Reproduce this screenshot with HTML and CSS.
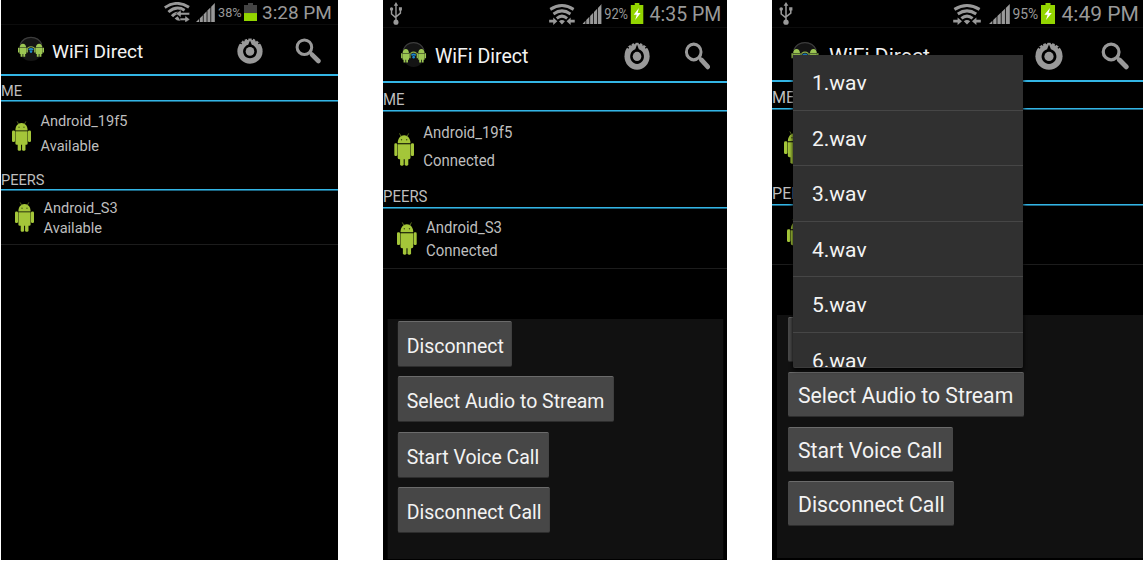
FILE: index.html
```html
<!DOCTYPE html>
<html lang="en">
<head>
<meta charset="utf-8">
<title>WiFi Direct</title>
<link rel="stylesheet" href="styles.css">
</head>
<body>
<svg class="defs" aria-hidden="true">
  <symbol id="robot" viewBox="0 0 20 32" preserveAspectRatio="none">
    <g fill="#a4c639">
      <path d="M3.6 10C3.6 5.4 6.2 2.2 10 2.2S16.4 5.4 16.4 10Z"/>
      <path d="M3.6 11H16.4V24Q16.4 25.4 15 25.4H5Q3.6 25.4 3.6 24Z"/>
      <rect x="0" y="10" width="3.2" height="12.4" rx="1.4"/>
      <rect x="16.8" y="10" width="3.2" height="12.4" rx="1.4"/>
      <rect x="6" y="23" width="3.6" height="8.8" rx="1.4"/>
      <rect x="10.6" y="23" width="3.6" height="8.8" rx="1.4"/>
    </g>
    <path d="M5.4 0.4L7 3.4M14.6 0.4L13 3.4" stroke="#6d8426" stroke-width="0.8"/>
    <circle cx="7.4" cy="6.6" r="0.7" fill="#3c4a12"/><circle cx="12.6" cy="6.6" r="0.7" fill="#3c4a12"/>
  </symbol>
  <symbol id="logo" viewBox="0 0 26 26">
    <circle cx="13" cy="13" r="12" fill="#141414"/>
    <path d="M2.2 8.5A11.8 11.8 0 0 1 23.8 8.5" fill="none" stroke="#3c3c3c" stroke-width="1.2"/>
    <g fill="#9cc653">
      <path d="M1.6 11.6Q2 7.8 4.9 7.8T8.2 11.6ZM1.6 12H8.2V18H1.6ZM0 11.8H1.3V16.6H0ZM8.5 11.8H9.8V16.6H8.5ZM2.6 17.6H4.5V20.8H2.6ZM5.3 17.6H7.2V20.8H5.3Z"/>
      <path d="M17.8 11.6Q18.2 7.8 21.1 7.8T24.4 11.6ZM17.8 12H24.4V18H17.8ZM16.2 11.8H17.5V16.6H16.2ZM24.7 11.8H26V16.6H24.7ZM18.8 17.6H20.7V20.8H18.8ZM21.5 17.6H23.4V20.8H21.5Z"/>
    </g>
    <path d="M9.8 12Q13 9.4 16.2 12" fill="none" stroke="#8fb04a" stroke-width="1.1"/>
    <path d="M10.8 13.9Q13 12 15.2 13.9" fill="none" stroke="#1b86cf" stroke-width="1.7"/>
    <circle cx="13" cy="15.6" r="1.3" fill="#1b86cf"/>
  </symbol>
  <symbol id="gear" viewBox="0 0 26 26">
    <circle cx="13" cy="13.2" r="12.6" fill="#999"/>
    <path d="M3.2 4.8L4.8 5.6M6.4 1.4L7.3 3.2M10.4 0L10.8 1.9M15.6 0L15.2 1.9M19.6 1.4L18.7 3.2M22.8 4.8L21.2 5.6" stroke="#000" stroke-width="1.3"/>
    <path d="M13 2.4L14.8 6.8A6.9 6.9 0 1 1 11.2 6.8Z" fill="#000"/>
    <circle cx="13" cy="13.4" r="4.3" fill="#999"/>
  </symbol>
  <symbol id="search" viewBox="0 0 26 26">
    <circle cx="9.4" cy="9.2" r="7.3" fill="none" stroke="#999" stroke-width="3"/>
    <path d="M15 14.6L17 16.6" stroke="#999" stroke-width="3"/>
    <path d="M17.2 16.8L23.4 23" stroke="#999" stroke-width="4.6" stroke-linecap="round"/>
  </symbol>
  <symbol id="usb" viewBox="0 0 14 24">
    <g fill="none" stroke="#999" stroke-width="1.6"><path d="M7 3V20M2 8V12.5L7 16.5M12 8V11.5L7 15.5"/></g>
    <path d="M7 0L9.5 4H4.5ZM10.3 5.6H13.7V8.9H10.3Z" fill="#999"/>
    <circle cx="2" cy="7.4" r="1.9" fill="#999"/><circle cx="7" cy="21" r="2.8" fill="#999"/>
  </symbol>
  <symbol id="wifi-tilt" viewBox="0 0 26 20">
    <g fill="none" stroke="#999" stroke-width="2.9">
      <path d="M0.8 5.6Q12.8 -2.6 25 5.2"/>
      <path d="M4.4 10Q12.4 3.2 20.6 8.2"/>
      <path d="M8 14.2Q11.4 10.2 15.4 11.4"/>
    </g>
    <path d="M10.6 16.4L13.6 14.2L16.6 18.6Q13.4 19.4 10.6 16.4Z" fill="#999"/>
    <path d="M11.8 11.7L17 7.8V10.4H25.6V13H17V15.4ZM26 17.4L21 13.6V16.1H16V18.6H21V20.8Z" fill="#999" stroke="#000" stroke-width=".5"/>
  </symbol>
  <symbol id="wifi" viewBox="0 0 28 21">
    <g fill="none" stroke="#999" stroke-width="3">
      <path d="M1.4 5.4Q14 -2.2 26.6 5.4"/>
      <path d="M4.8 10Q14 3.8 23.2 10"/>
      <path d="M8.4 14.4Q14 9.8 19.6 14.4"/>
    </g>
    <path d="M10.8 17.2Q14 14.8 17.2 17.2L14 20.4ZM9 17.2L4.6 13.4V15.8H0.2V18.6H4.6V21ZM19 17.2L23.4 13.4V15.8H27.8V18.6H23.4V21Z" fill="#999"/>
  </symbol>
  <symbol id="signal" viewBox="0 0 20 20" preserveAspectRatio="none">
    <path d="M0 20L3.2 16.8V20ZM4 16L7.2 12.8V20H4ZM8 12L11.2 8.8V20H8ZM12 8L15.2 4.8V20H12ZM16 4L19.8 0V20H16Z" fill="#999"/>
  </symbol>
  <symbol id="battery-low" viewBox="0 0 13 19" preserveAspectRatio="none">
    <path d="M4 0H9V2H13V11H0V2H4Z" fill="#444"/><path d="M0 10.6H13V19H0Z" fill="#93d500"/>
  </symbol>
  <symbol id="battery-charge" viewBox="0 0 14 21" preserveAspectRatio="none">
    <path d="M4.5 0H9.5V2H14V21H0V2H4.5Z" fill="#93d500"/>
    <path d="M9 5L3.4 11.8H6.6L5 17L10.8 10H7.6Z" fill="#fff"/>
  </symbol>
</svg>

<main class="board">
  <section class="phone phone-small">
    <div class="screen">
      <div class="status">
        <svg class="wifi"><use href="#wifi-tilt"/></svg>
        <svg class="signal"><use href="#signal"/></svg>
        <span class="percent">38%</span>
        <svg class="battery"><use href="#battery-low"/></svg>
        <span class="time">3:28 PM</span>
      </div>
      <header class="appbar">
        <svg class="logo"><use href="#logo"/></svg>
        <h1 class="title">WiFi Direct</h1>
        <svg class="action gear"><use href="#gear"/></svg>
        <svg class="action search"><use href="#search"/></svg>
      </header>
      <h2 class="heading heading-me">ME</h2>
      <div class="device me">
        <svg class="robot"><use href="#robot"/></svg>
        <div><p>Android_19f5</p><p>Available</p></div>
      </div>
      <h2 class="heading heading-peers">PEERS</h2>
      <div class="device peer">
        <svg class="robot"><use href="#robot"/></svg>
        <div><p>Android_S3</p><p>Available</p></div>
      </div>
    </div>
  </section>

  <section class="phone phone-narrow">
    <div class="screen">
      <div class="status">
        <svg class="usb"><use href="#usb"/></svg>
        <svg class="wifi"><use href="#wifi"/></svg>
        <svg class="signal"><use href="#signal"/></svg>
        <span class="percent">92%</span>
        <svg class="battery"><use href="#battery-charge"/></svg>
        <span class="time">4:35 PM</span>
      </div>
      <header class="appbar">
        <svg class="logo"><use href="#logo"/></svg>
        <h1 class="title">WiFi Direct</h1>
        <svg class="action gear"><use href="#gear"/></svg>
        <svg class="action search"><use href="#search"/></svg>
      </header>
      <h2 class="heading heading-me">ME</h2>
      <div class="device me">
        <svg class="robot"><use href="#robot"/></svg>
        <div><p>Android_19f5</p><p>Connected</p></div>
      </div>
      <h2 class="heading heading-peers">PEERS</h2>
      <div class="device peer">
        <svg class="robot"><use href="#robot"/></svg>
        <div><p>Android_S3</p><p>Connected</p></div>
      </div>
      <div class="panel">
        <button class="btn btn-disconnect">Disconnect</button>
        <button class="btn btn-select">Select Audio to Stream</button>
        <button class="btn btn-start">Start Voice Call</button>
        <button class="btn btn-end">Disconnect Call</button>
      </div>
    </div>
  </section>

  <section class="phone phone-wide">
    <div class="screen">
      <div class="status">
        <svg class="usb"><use href="#usb"/></svg>
        <svg class="wifi"><use href="#wifi"/></svg>
        <svg class="signal"><use href="#signal"/></svg>
        <span class="percent">95%</span>
        <svg class="battery"><use href="#battery-charge"/></svg>
        <span class="time">4:49 PM</span>
      </div>
      <header class="appbar">
        <svg class="logo"><use href="#logo"/></svg>
        <h1 class="title">WiFi Direct</h1>
        <svg class="action gear"><use href="#gear"/></svg>
        <svg class="action search"><use href="#search"/></svg>
      </header>
      <h2 class="heading heading-me">ME</h2>
      <div class="device me">
        <svg class="robot"><use href="#robot"/></svg>
      </div>
      <h2 class="heading heading-peers">PEERS</h2>
      <div class="device peer">
        <svg class="robot"><use href="#robot"/></svg>
      </div>
      <div class="panel">
        <button class="btn btn-disconnect" aria-label="Disconnect"></button>
        <button class="btn btn-select">Select Audio to Stream</button>
        <button class="btn btn-start">Start Voice Call</button>
        <button class="btn btn-end">Disconnect Call</button>
      </div>
      <ul class="menu">
        <li>1.wav</li><li>2.wav</li><li>3.wav</li><li>4.wav</li><li>5.wav</li><li>6.wav</li>
      </ul>
    </div>
  </section>
</main>
</body>
</html>
```
FILE: styles.css
```css
* { box-sizing: border-box; }
body { margin: 0; background: #fff; font-family: Roboto, sans-serif; overflow: hidden; }
h1, h2, p, ul { margin: 0; padding: 0; font-weight: 400; }
svg { display: block; flex: none; }
.defs { position: absolute; width: 0; height: 0; }

.board { display: flex; width: 1143px; height: 587px; padding-left: 1px; align-items: flex-start; }
.phone { flex: none; height: 560px; background: #000; overflow: hidden; }
.screen { position: relative; width: 371px; height: 560px; display: flex; flex-direction: column; color: #bebebe; font-size: 16.1px; }
.phone-small { width: 337px; }
.phone-small .screen { width: 337px; font-size: 14.6px; }
.phone-narrow { width: 344px; margin-left: 45px; }
.phone-narrow .screen { transform: scaleX(.9272); transform-origin: 0 0; }
.phone-wide { width: 371px; margin-left: 45px; }

/* Status bar */
.status { flex: none; height: 28px; display: flex; align-items: flex-start; color: #999; border-bottom: 1px solid #0c0c0c; }
.usb { width: 14px; height: 23px; margin: 2px 0 0 7px; }
.wifi { width: 28px; height: 21px; margin: 4px 0 0 160px; }
.signal { width: 21px; height: 20px; margin: 4px 0 0 8px; }
.percent { width: 28px; margin-left: 2.5px; font-size: 13.9px; line-height: 29px; }
.battery { width: 14px; height: 21px; margin-top: 3px; }
.time { margin-left: 7px; font-size: 21px; line-height: 28px; white-space: nowrap; }
.phone-narrow .wifi { margin-left: 158px; }
.phone-small .status { height: 25px; }
.phone-small .wifi { width: 26px; height: 20px; margin: 2px 0 0 163px; }
.phone-small .signal { width: 19px; height: 19px; margin: 3px 0 0 6px; }
.phone-small .percent { width: 26px; margin-left: 3px; font-size: 12.7px; line-height: 26px; }
.phone-small .battery { width: 13px; height: 18px; }
.phone-small .time { margin-left: 5px; font-size: 19px; line-height: 25px; }

/* App bar */
.appbar { flex: none; height: 54px; padding: 4px 0 0 19px; display: flex; align-items: center; border-bottom: 2px solid #33b5e5; }
.logo { width: 28px; height: 27px; margin-top: -4px; }
.title { margin-left: 9px; width: 199px; color: #f3f3f3; font-size: 21.1px; line-height: 30px; padding-left: 1px; }
.action { width: 28px; height: 28px; }
.gear { margin-left: 8px; }
.search { margin-left: 38px; }
.phone-small .appbar { height: 51px; padding: 3px 0 0 17px; }
.phone-small .logo { width: 26px; height: 26px; }
.phone-small .title { margin-left: 8px; width: 177px; font-size: 19.1px; padding: 1px 0 0; }
.phone-small .action { width: 26px; height: 26px; }
.phone-small .search { margin-left: 32px; }
.phone-narrow .appbar { height: 55px; padding-top: 3px; }
.phone-narrow .title { width: 196px; padding-left: 0; }
.phone-narrow .search { margin-left: 37px; }

/* Lists */
.heading { flex: none; height: 28px; display: flex; align-items: flex-end; font-size: inherit; line-height: 1.16; border-bottom: 1px solid #33b5e5; box-shadow: 0 1px #1b6480; }
.heading-peers { height: 34px; }
.device { flex: none; display: flex; height: 62px; }
.device.me { padding: 8px 0 0 12px; line-height: 27.8px; }
.device.peer { height: 60px; padding: 9.3px 0 0 15px; line-height: 22.3px; border-bottom: 1px solid #1c1c1c; }
.robot { width: 21.5px; height: 33px; margin: 14px 10px 0 0; }
.peer .robot { margin-top: 5px; }
.phone-small .heading { height: 25px; }
.phone-small .heading-peers { height: 31px; }
.phone-small .device.me { height: 58px; padding: 8px 0 0 11px; line-height: 25.3px; }
.phone-small .device.peer { height: 55px; padding: 8px 0 0 14px; line-height: 20.3px; }
.phone-small .robot { width: 19px; height: 30px; margin: 12px 9.5px 0 0; }
.phone-small .peer .robot { margin-top: 4px; }

.phone-narrow .device.me { height: 63px; }
.phone-narrow .device.peer { height: 61px; }

/* Button panel */
.panel { flex: none; width: 362px; height: 240px; margin: 50px 0 0 4.5px; padding: 2px 0 0 11.5px; background: #111; display: flex; flex-direction: column; align-items: flex-start; gap: 9.4px; }
.btn { height: 46px; padding: 2px 0 0 10px; border: 0; border-top: 1px solid #6b6b6b; border-bottom: 1px solid #2d2d2d; border-radius: 2px; background: #474747; color: #f3f3f3; font: 21.2px/42px Roboto, sans-serif; text-align: left; white-space: nowrap; }
.btn-disconnect { width: 123px; }
.btn-select { width: 235.5px; }
.btn-start { width: 164.5px; }
.btn-end { width: 166px; }
.phone-narrow .panel { padding-left: 11px; }
.phone-narrow .btn { font-size: 21px; line-height: 44px; }
.phone-narrow .btn-select { width: 233px; }
.phone-narrow .btn-start { width: 163px; }
.phone-narrow .btn-end { width: 164px; }

.phone-wide .heading-me { height: 27px; }
.phone-wide .panel { width: 366.5px; height: 243px; }
.phone-wide .panel { gap: 9.8px; }
.phone-wide .btn { height: 45px; }

/* Audio list popup, overlapping the screen */
.menu { position: absolute; left: 21px; top: 55px; width: 230px; height: 313px; overflow: hidden; list-style: none; background: #303030; color: #f3f3f3; font-size: 21px; border-bottom: 1px solid #3c3c3c; border-radius: 0 0 2px 2px; box-shadow: 0 2px 4px #000; }
.menu li { height: 55.5px; line-height: 57px; padding-left: 19px; border-bottom: 1px solid #464646; }
```
